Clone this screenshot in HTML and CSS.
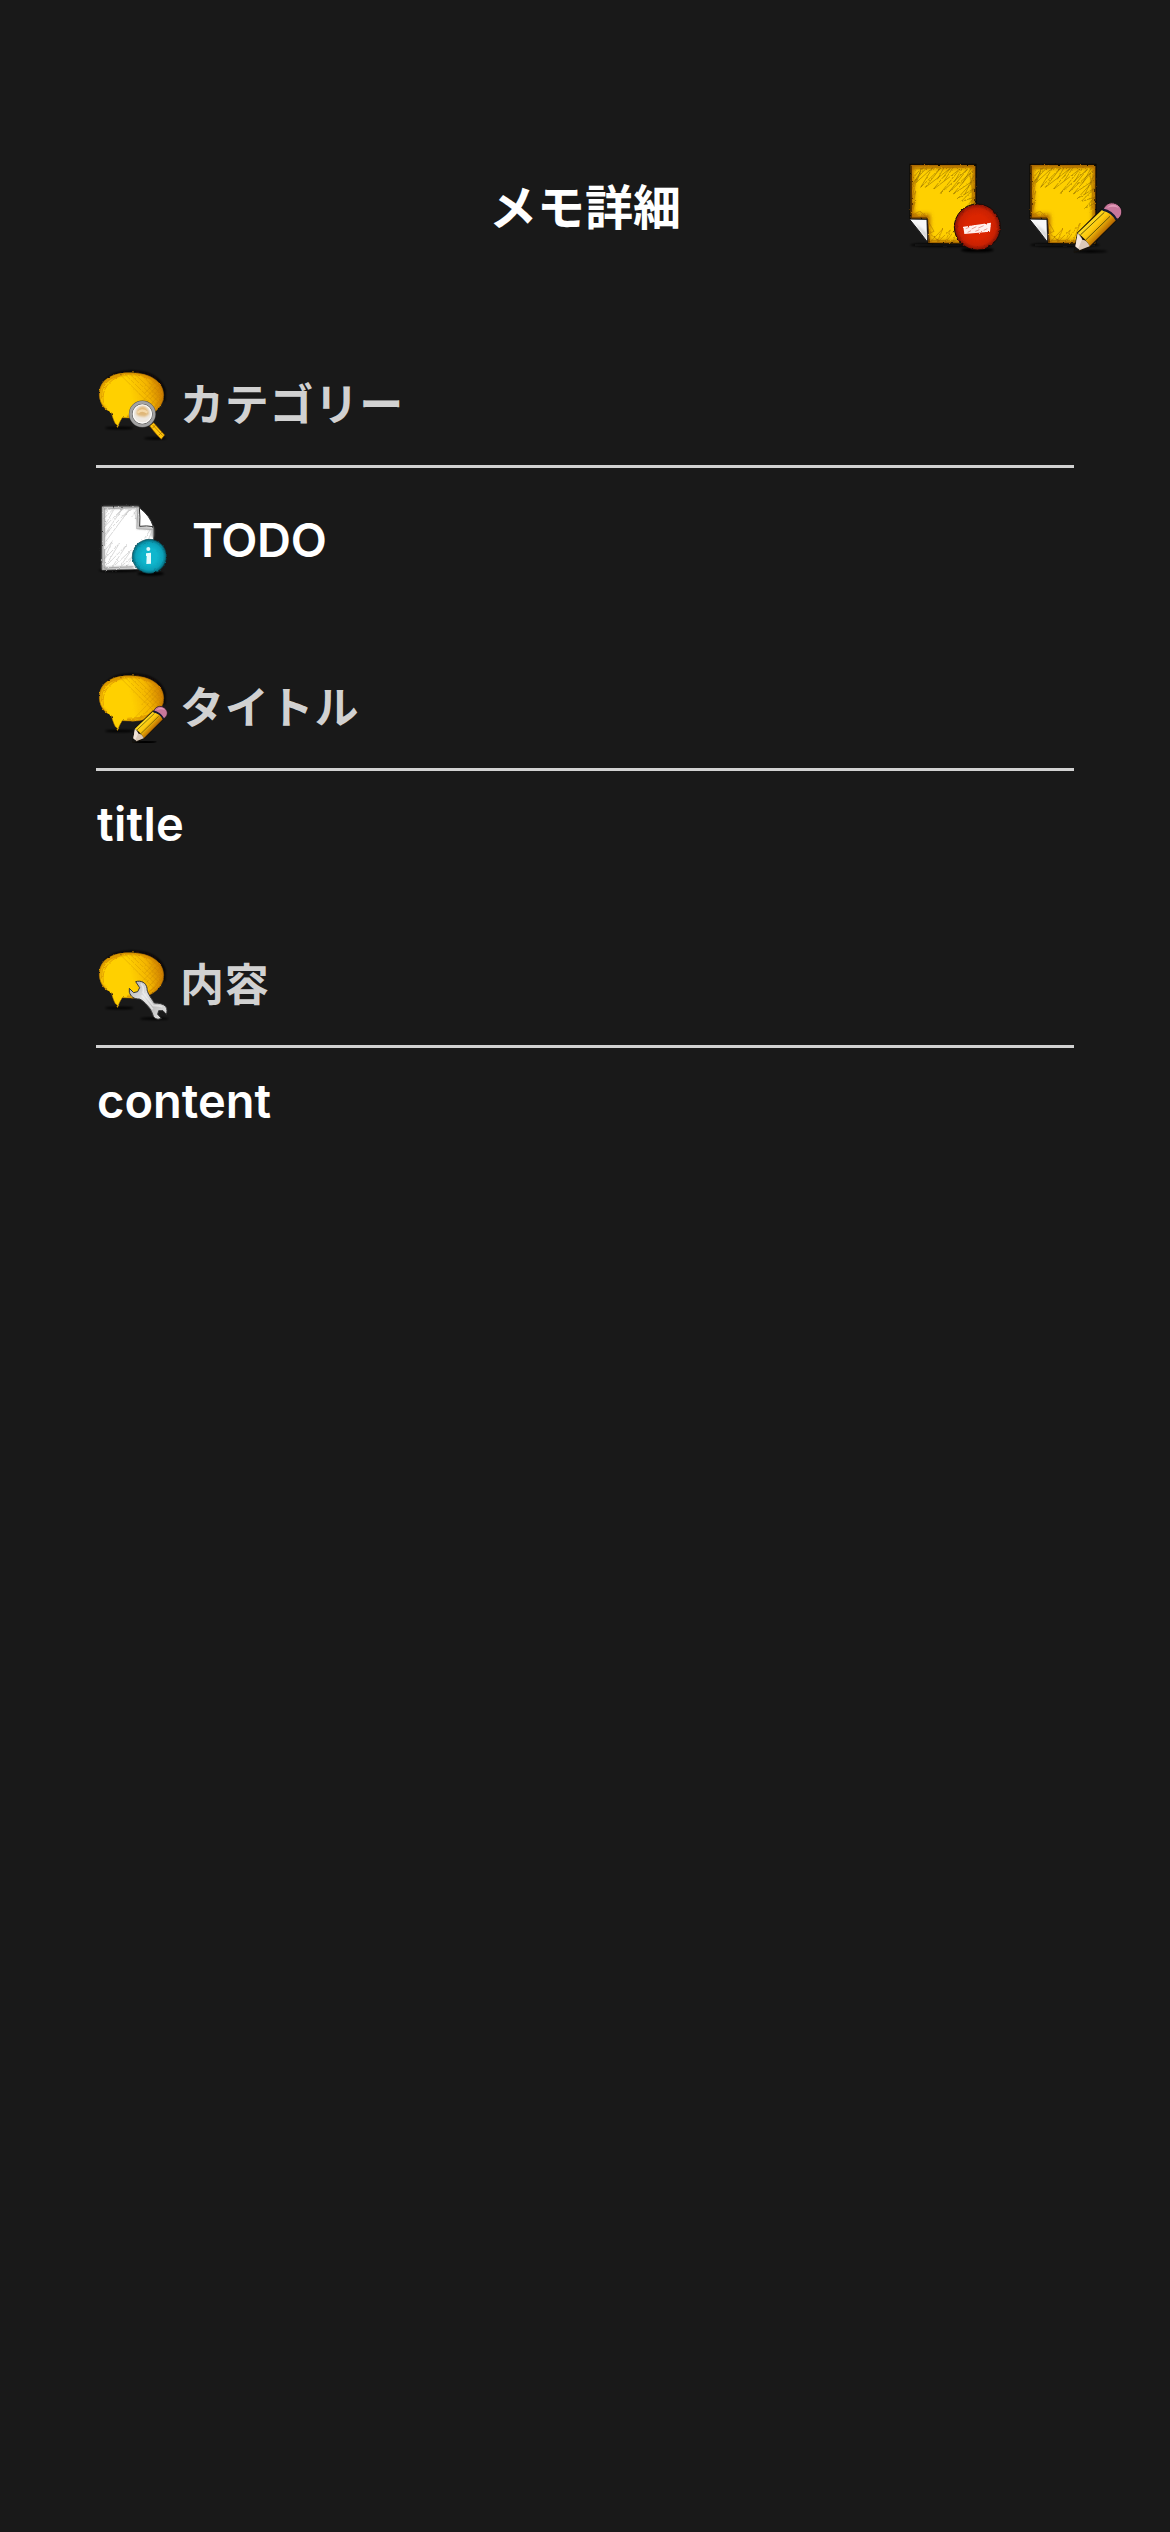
FILE: index.html
```html
<!DOCTYPE html>
<html lang="ja">
<head>
<meta charset="utf-8">
<title>メモ詳細</title>
<link rel="stylesheet" href="styles.css">
</head>
<body>
<svg class="defs" width="0" height="0" aria-hidden="true">
  <defs>
    <filter id="soft" x="-30%" y="-30%" width="160%" height="160%"><feGaussianBlur stdDeviation="7"/></filter>
    <filter id="soft-s" x="-30%" y="-50%" width="160%" height="200%"><feGaussianBlur stdDeviation="3"/></filter>
    <filter id="rough" x="-10%" y="-10%" width="120%" height="120%" color-interpolation-filters="sRGB"><feTurbulence type="fractalNoise" baseFrequency="0.12" numOctaves="2" seed="4"/><feDisplacementMap in="SourceGraphic" scale="7" xChannelSelector="R" yChannelSelector="G"/></filter>
    <linearGradient id="bubble-fill" x1="0.1" y1="0.6" x2="1" y2="0.45"><stop offset="0.45" stop-color="#ffd000"/><stop offset="0.75" stop-color="#f4b500"/><stop offset="1" stop-color="#cf7f00"/></linearGradient>
    <linearGradient id="pencil-fill" gradientUnits="userSpaceOnUse" x1="222" y1="215" x2="270" y2="259"><stop offset="0" stop-color="#ffe62e"/><stop offset="0.55" stop-color="#fbc60c"/><stop offset="1" stop-color="#b96b00"/></linearGradient>
    <radialGradient id="red-fill"><stop offset="0.5" stop-color="#db2500"/><stop offset="0.8" stop-color="#c92102"/><stop offset="1" stop-color="#7d1205"/></radialGradient>
    <radialGradient id="teal-fill"><stop offset="0.45" stop-color="#10b6cd"/><stop offset="0.8" stop-color="#0ba0b8"/><stop offset="1" stop-color="#066778"/></radialGradient>
    <linearGradient id="metal" x1="0" y1="0" x2="1" y2="1"><stop offset="0" stop-color="#aaa"/><stop offset="0.4" stop-color="#e2e2e2"/><stop offset="0.65" stop-color="#bbb"/><stop offset="1" stop-color="#eee"/></linearGradient>
    <clipPath id="note-clip"><path d="M61 44H257V281L115 279L112 207L61 206Z"/></clipPath>
    <clipPath id="bubble-clip"><path d="M64 158C39 147 26 124 28 97C31 58 68 37 120 38C180 38 221 65 221 106C219 150 177 178 116 174L97 173C91 181 86 192 83 203C75 191 68 176 64 158Z"/></clipPath>
    <symbol id="note" viewBox="0 0 360 345">
      <ellipse cx="165" cy="285" rx="105" ry="6" fill="#070707" filter="url(#soft-s)"/>
      <g filter="url(#rough)">
        <path d="M61 44H257V281L115 279L112 207L61 206Z" fill="#ffd000" stroke="#090701" stroke-width="5"/>
        <g clip-path="url(#note-clip)">
          <path d="M61 216V44H258V282H110V203H60" fill="none" stroke="#b06800" stroke-width="20" filter="url(#soft)"/>
          <path d="M66 88L94 54L80 96L128 53L92 112L151 55L106 112L181 55L129 119L210 57L151 130L232 58L177 126L247 64L190 132L251 91L202 146L253 115L214 154L254 142L224 176L256 158M66 106L100 52M111 52L75 92M163 51L142 88M190 51L163 92M218 53L193 96M244 54L217 100M252 76L224 134" fill="none" stroke="#826000" stroke-width="2" opacity=".75"/>
          <path d="M64 120L80 86L65 148L78 122L65 178L77 150L64 197L90 183L110 202M114 213L132 244L118 250L149 275M120 277L158 237L141 278L181 240L164 280L211 219L187 280L250 212L215 280L256 233M239 70L248 125L243 180M249 62V270M67 51H254M64 57L253 49M124 271L253 274" fill="none" stroke="#a36700" stroke-width="2" opacity=".7"/>
          <path d="M64 47V204H111L118 278" fill="none" stroke="#4d2a00" stroke-width="3"/>
        </g>
      </g>
      <path d="M58 207L111 208L113 277Q89 244 58 207Z" fill="#f8f8f8" stroke="#111" stroke-width="3"/>
      <path d="M72 217L112 271L111 250Z" fill="#bdbdbd" filter="url(#soft-s)" opacity=".6"/>
    </symbol>
    <symbol id="pencil" viewBox="0 0 360 345">
      <ellipse cx="243" cy="304" rx="50" ry="4" fill="#050505" filter="url(#soft-s)"/>
      <path d="M203 249L275 178Q304 183 321 209L239 291Q220 301 193 306Z" fill="#17120a" stroke="#17120a" stroke-width="4" stroke-linejoin="round"/>
      <path d="M203 250L276 180Q304 186 319 209L239 289Q228 266 203 250Z" fill="url(#pencil-fill)"/>
      <path d="M211 255L283 187M226 271L300 199" stroke="#665b05" stroke-width="3"/>
      <path d="M203 250Q215 261 217 269Q231 270 239 289L208 301L196 291Z" fill="#dbc9b8"/>
      <path d="M203 251L216 269L203 299L196 292Z" fill="#f3e5d9"/>
      <path d="M195 289L209 300L192 306Z" fill="#151515"/>
      <path d="M279 179C288 158 306 153 323 164C343 178 337 202 319 209C308 192 296 183 279 179Z" fill="#c8779b" stroke="#171214" stroke-width="3"/>
      <path d="M291 174C302 160 318 162 326 174C314 169 302 170 291 174Z" fill="#e8a4bf" opacity=".8"/>
      <path d="M278 179Q306 184 320 210" fill="none" stroke="#151b30" stroke-width="7"/>
    </symbol>
    <symbol id="bubble" viewBox="18 0 252 270">
      <ellipse cx="88" cy="204" rx="43" ry="4" fill="#050505" filter="url(#soft-s)"/>
      <path d="M44 65Q75 29 144 36Q205 41 223 89V124" fill="none" stroke="#080602" stroke-width="6" filter="url(#soft-s)"/>
      <g filter="url(#rough)">
        <path d="M64 158C39 147 26 124 28 97C31 58 68 37 120 38C180 38 221 65 221 106C219 150 177 178 116 174L97 173C91 181 86 192 83 203C75 191 68 176 64 158Z" fill="url(#bubble-fill)" stroke="#9b6200" stroke-width="1.5"/>
        <g clip-path="url(#bubble-clip)">
          <path d="M45 148C25 130 22 115 28 94C38 30 180 19 216 77C239 126 196 180 112 176" fill="none" stroke="#c27400" stroke-width="9" filter="url(#soft-s)" opacity=".75"/>
          <path d="M92 45L205 158M105 43L212 147M119 42L216 135M134 42L219 123M152 43L221 109M171 46L219 93M217 78L127 172M221 92L145 172M221 109L166 168M203 59L164 100M211 68L155 126" fill="none" stroke="#b77b00" stroke-width="1.5" opacity=".55"/>
          <path d="M34 116Q34 59 82 49M40 128Q32 70 96 45M112 166Q190 168 210 119M126 170Q201 164 216 104M160 48Q208 62 212 105" fill="none" stroke="#d78b00" stroke-width="2"/>
        </g>
      </g>
    </symbol>
  </defs>
</svg>

<header class="header">
  <h1 class="header-title">メモ詳細</h1>
  <div class="actions">
    <svg class="action-icon" viewBox="0 0 360 345" role="img" aria-label="削除">
      <use href="#note"/>
      <ellipse cx="262" cy="300" rx="49" ry="7" fill="#050505" filter="url(#soft-s)"/>
      <circle cx="262" cy="231" r="69" fill="url(#red-fill)" stroke="#170b08" stroke-width="3" filter="url(#rough)"/>
      <path d="M220 230L303 218L300 245L223 252Z" fill="#fff0ed" filter="url(#rough)"/>
      <path d="M227 236L238 232M245 237L259 230M265 234L281 227M233 247L243 242M256 244L268 239M281 241L292 236" stroke="#dc7667" stroke-width="2"/>
    </svg>
    <svg class="action-icon" viewBox="0 0 360 345" role="img" aria-label="編集">
      <use href="#note"/>
      <use href="#pencil"/>
    </svg>
  </div>
</header>

<main class="memo">
  <section class="section category">
    <h2 class="label">
      <svg class="icon" viewBox="18 0 252 270">
        <use href="#bubble" x="18" width="252" height="270"/>
        <ellipse cx="196" cy="235" rx="35" ry="4" fill="#050505" filter="url(#soft-s)"/>
        <path d="M179 198L191 188Q205 204 224 225L214 238Q202 228 179 198Z" fill="#ffc60a" stroke="#7d4900" stroke-width="2"/>
        <path d="M187 205L197 195M206 226L216 216M188 195L218 227" fill="none" stroke="#a76a00" stroke-width="2"/>
        <circle cx="157" cy="162" r="35" fill="#e8e4df" stroke="#555" stroke-width="11"/>
        <circle cx="157" cy="162" r="35" fill="none" stroke="#a3a3a3" stroke-width="8"/>
        <circle cx="157" cy="162" r="27" fill="#eee9e2" stroke="#fff" stroke-width="3"/>
        <path d="M139 163Q140 138 161 139Q176 146 177 163L165 170L147 168Z" fill="#dfb779" filter="url(#soft-s)"/>
        <path d="M143 158Q155 145 172 158" fill="none" stroke="#f4d7a7" stroke-width="7"/>
      </svg>
      <span>カテゴリー</span>
    </h2>
    <div class="category-value">
      <svg class="icon" viewBox="18 0 252 270">
        <ellipse cx="86" cy="226" rx="60" ry="5" fill="#050505" filter="url(#soft-s)"/>
        <g filter="url(#rough)">
          <path d="M36 35L146 35L190 94V221L36 225Z" fill="#fff" stroke="#555" stroke-width="2"/>
          <path d="M146 37L42 38L39 220L130 217M143 40L145 98L188 101V126" fill="none" stroke="#999" stroke-width="7" filter="url(#soft-s)" opacity=".8"/>
          <path d="M40 71L74 39L42 97L98 40L44 119L119 42L47 140M45 166L66 140L43 192L88 145L45 216L109 151L65 219L124 165L88 219L128 184L109 218M47 55L61 40M42 128L59 105M99 42L76 66M122 42L102 65M140 45L125 66M132 50L144 83M180 105L164 130M187 106L175 134" fill="none" stroke="#bbb" stroke-width="1.7"/>
          <path d="M38 37V222M43 39V219M40 42L143 37M41 219L134 215M144 43L140 101L188 104" fill="none" stroke="#888" stroke-width="1.5"/>
        </g>
        <path d="M148 38Q151 67 149 94Q170 91 190 95Q180 62 148 38Z" fill="#fff" stroke="#333" stroke-width="3"/>
        <ellipse cx="182" cy="236" rx="40" ry="6" fill="#050505" filter="url(#soft-s)"/>
        <circle cx="178" cy="184" r="51" fill="url(#teal-fill)" stroke="#084954" stroke-width="2" filter="url(#rough)"/>
        <circle cx="175" cy="162" r="6" fill="#d9f6fa"/>
        <path d="M168 175L183 173V206L169 207L170 183L168 183Z" fill="#e4fafd"/>
      </svg>
      <span>TODO</span>
    </div>
  </section>

  <section class="section title">
    <h2 class="label">
      <svg class="icon" viewBox="18 0 252 270">
        <use href="#bubble" x="18" width="252" height="270"/>
        <use href="#pencil" x="-14" y="14" width="264" height="253"/>
      </svg>
      <span>タイトル</span>
    </h2>
    <p class="value value-title">title</p>
  </section>

  <section class="section">
    <h2 class="label">
      <svg class="icon" viewBox="18 0 252 270">
        <use href="#bubble" x="18" width="252" height="270"/>
        <ellipse cx="193" cy="236" rx="43" ry="4" fill="#050505" filter="url(#soft-s)"/>
        <path d="M137 125C153 120 169 128 171 145C171 158 179 167 193 189C207 189 219 191 227 199C233 208 231 217 229 223L219 212L206 212L203 223L214 235C204 240 195 237 190 229C187 219 184 210 173 198C162 186 155 179 148 177C132 178 122 169 118 157L118 145L131 158L143 155L149 143Z" fill="url(#metal)" stroke="#353535" stroke-width="3" stroke-linejoin="round"/>
        <path d="M153 131Q163 141 159 158L190 197Q204 196 217 200M155 166L188 208" fill="none" stroke="#f3f3f3" stroke-width="5" opacity=".6"/>
      </svg>
      <span>内容</span>
    </h2>
    <p class="value value-content">content</p>
  </section>
</main>
</body>
</html>
```
FILE: styles.css
```css
* { box-sizing: border-box; }

body {
  margin: 0;
  min-height: 2532px;
  background: #191919;
  color: #fff;
  font-family: Inter, "Noto Sans CJK JP", sans-serif;
}

h1, h2, p { margin: 0; }

.defs { display: block; }

.header {
  display: grid;
  grid-template-columns: 1fr auto 1fr;
  align-items: center;
  padding: 150px 40px 0;
}

.header-title {
  grid-column: 2;
  font-size: 48px;
  line-height: 72px;
  font-weight: 700;
}

.actions {
  display: flex;
  justify-content: flex-end;
}

.action-icon {
  display: block;
  width: 120px;
  height: 115px;
}

.memo { padding: 95px 96px 0; }

.category { height: 303px; }

.title { height: 277px; }

.label {
  display: flex;
  align-items: center;
  height: 108px;
  padding-bottom: 15px;
  border-bottom: 3px solid #d1d1d1;
  color: #d1d1d1;
  font-size: 44px;
  line-height: 66px;
  font-weight: 700;
  letter-spacing: 0.8px;
}

.icon {
  flex: none;
  width: 84px;
  height: 90px;
}

.category-value {
  display: flex;
  align-items: center;
  gap: 12px;
  height: 90px;
  margin-top: 27px;
  font-size: 47px;
  line-height: 58px;
  font-weight: 600;
  letter-spacing: -0.3px;
}

.value {
  margin-top: 23px;
  padding-left: 1px;
  font-size: 47px;
  line-height: 60px;
  font-weight: 600;
}

.value-title { letter-spacing: 0.3px; }
```
